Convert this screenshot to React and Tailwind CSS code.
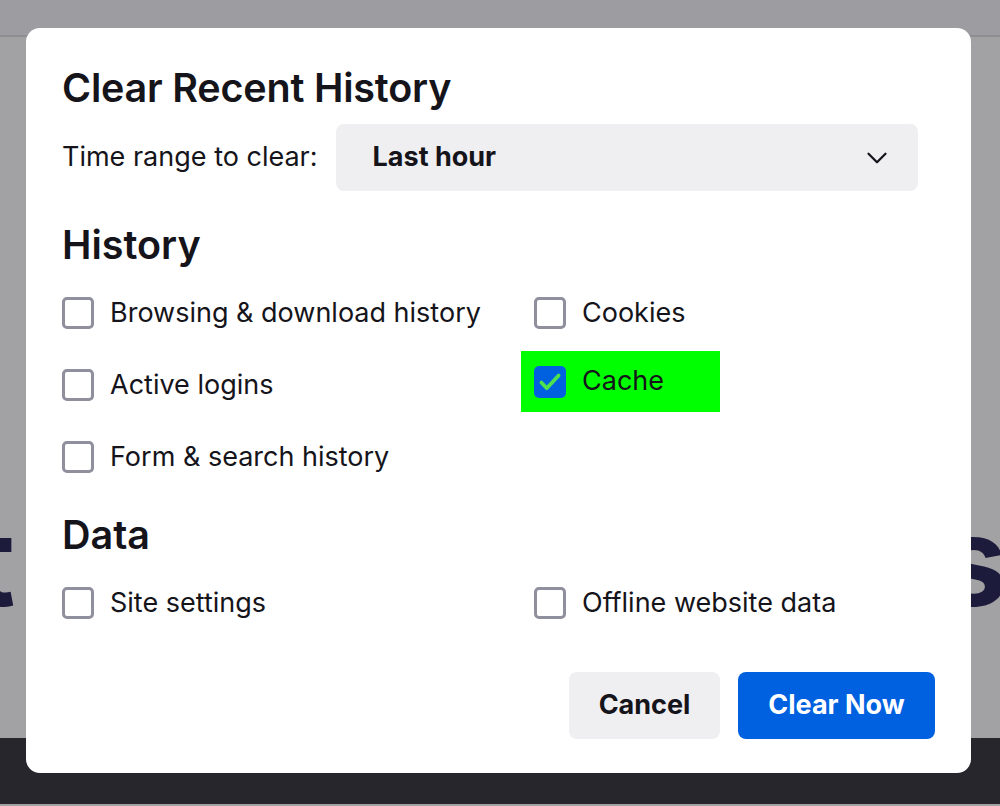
import { ChevronDown } from "lucide-react";

function Box({ checked }) {
  if (checked) {
    return (
      <span className="flex h-[32px] w-[32px] shrink-0 items-center justify-center rounded-[5px] bg-[#0061e0]">
        <svg width="26" height="26" viewBox="0 0 24 24" fill="none">
          <path d="M4 12.5l5 5.2L20 6" stroke="#4ee24e" strokeWidth="3.4" strokeLinecap="round" strokeLinejoin="round" />
        </svg>
      </span>
    );
  }
  return <span className="h-[32px] w-[32px] shrink-0 rounded-[5px] border-[3px] border-[#8f8f9d] bg-white" />;
}

function Option({ label, checked, highlight }) {
  if (highlight) {
    return (
      <div className="flex h-[72px] items-center">
        <div className="-ml-[13px] -mt-[7px] flex h-[61px] w-[199px] items-center gap-[16px] bg-[#00ff00] pl-[13px]">
          <Box checked={checked} />
          <span>{label}</span>
        </div>
      </div>
    );
  }
  return (
    <div className="flex h-[72px] items-center gap-[16px]">
      <Box checked={checked} />
      <span>{label}</span>
    </div>
  );
}

export default function App() {
  return (
    <div
      className="relative h-[806px] w-[1000px] overflow-hidden bg-[#a2a2a4]"
      style={{ fontFamily: "Inter, 'Noto Sans', sans-serif" }}
    >
      {/* page behind the modal */}
      <div className="h-[37px] border-b-[2px] border-[#8e8e92] bg-[#9c9ca1]" />
      <div className="flex h-[701px] items-start justify-between pt-[462px] text-[124px] font-bold leading-none text-[#1d1b3b]">
        <span className="-ml-[30px]">t</span>
        <span className="-mr-[8px]">s</span>
      </div>
      <div className="h-[66px] bg-[#26262c]" />

      {/* dialog */}
      <div className="absolute left-[26px] top-[28px] flex h-[745px] w-[945px] flex-col rounded-[14px] bg-white pl-[36px] pr-[36px] text-[#15141a]">
        <h1 className="mt-[38px] text-[39.5px] font-semibold leading-[44px] tracking-[-0.2px]">Clear Recent History</h1>

        <div className="mt-[14px] flex items-center">
          <span className="text-[27px]">Time range to clear:</span>
          <div className="ml-[18px] flex h-[67px] w-[582px] items-center justify-between rounded-[8px] bg-[#efeff2] pl-[37px] pr-[24px]">
            <span className="text-[27px] font-bold">Last hour</span>
            <ChevronDown size={34} strokeWidth={1.6} />
          </div>
        </div>

        <h2 className="mt-[32px] text-[39.5px] font-semibold leading-[44px]">History</h2>
        <div className="mt-[10px] grid grid-cols-[472px_1fr] text-[27px]">
          <Option label="Browsing & download history" />
          <Option label="Cookies" />
          <Option label="Active logins" />
          <Option label="Cache" checked highlight />
          <Option label="Form & search history" />
        </div>

        <h2 className="mt-[20px] text-[39.5px] font-semibold leading-[44px]">Data</h2>
        <div className="mt-[10px] grid grid-cols-[472px_1fr] text-[27px]">
          <Option label="Site settings" />
          <Option label="Offline website data" />
        </div>

        <div className="mt-[33px] flex justify-end gap-[18px] text-[27px] font-bold">
          <button className="h-[67px] w-[151px] rounded-[8px] bg-[#efeff2]">Cancel</button>
          <button className="h-[67px] w-[197px] rounded-[8px] bg-[#0061e0] text-white">Clear Now</button>
        </div>
      </div>
    </div>
  );
}
